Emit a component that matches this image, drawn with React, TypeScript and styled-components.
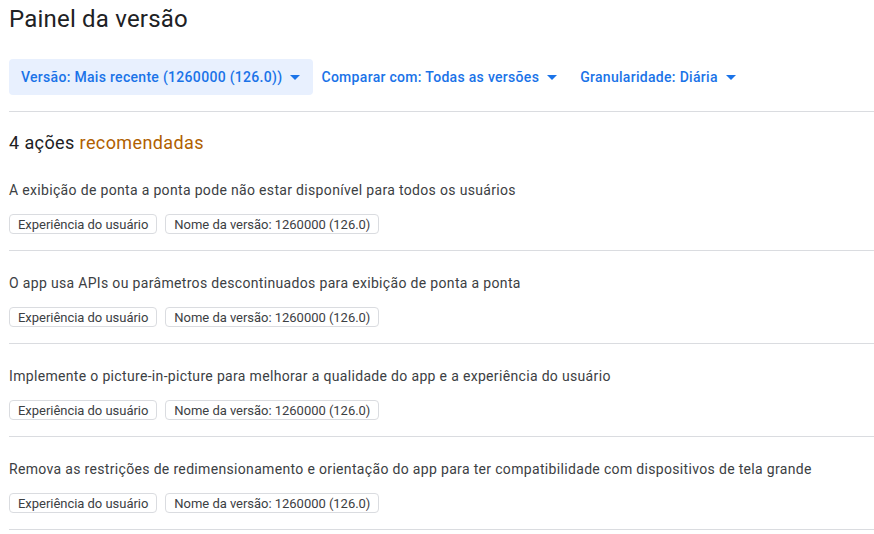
import React from "react";
import styled, { createGlobalStyle } from "styled-components";

const GlobalStyle = createGlobalStyle`
  body {
    margin: 0;
    background: #ffffff;
    font-family: Roboto, "Noto Sans", Arial, sans-serif;
    color: #202124;
  }
`;

const filtros = [
  { rotulo: "Versão: Mais recente (1260000 (126.0))", ativo: true },
  { rotulo: "Comparar com: Todas as versões", ativo: false },
  { rotulo: "Granularidade: Diária", ativo: false },
];

const acoes = [
  "A exibição de ponta a ponta pode não estar disponível para todos os usuários",
  "O app usa APIs ou parâmetros descontinuados para exibição de ponta a ponta",
  "Implemente o picture-in-picture para melhorar a qualidade do app e a experiência do usuário",
  "Remova as restrições de redimensionamento e orientação do app para ter compatibilidade com dispositivos de tela grande",
];

const Seta = () => (
  <svg width="10" height="5" viewBox="0 0 10 5">
    <path d="M0 0 L10 0 L5 5 Z" fill="currentColor" />
  </svg>
);

const App: React.FC = () => (
  <>
    <GlobalStyle />
    <Pagina>
      <Titulo>Painel da versão</Titulo>
      <BarraFiltros>
        {filtros.map((f) => (
          <BotaoFiltro key={f.rotulo} ativo={f.ativo}>
            {f.rotulo}
            <Seta />
          </BotaoFiltro>
        ))}
      </BarraFiltros>
      <Secao>
        <Cabecalho>
          4 ações <Destaque>recomendadas</Destaque>
        </Cabecalho>
        {acoes.map((texto) => (
          <Item key={texto}>
            <TextoItem>{texto}</TextoItem>
            <Etiquetas>
              <Etiqueta>Experiência do usuário</Etiqueta>
              <Etiqueta>Nome da versão: 1260000 (126.0)</Etiqueta>
            </Etiquetas>
          </Item>
        ))}
      </Secao>
    </Pagina>
  </>
);

export default App;

const Pagina = styled.div`
  padding-left: 9px;
  padding-top: 3px;
`;

const Titulo = styled.h1`
  margin: 0;
  font-size: 24px;
  font-weight: 400;
  line-height: 32px;
  letter-spacing: 0.2px;
  color: #202124;
`;

const BarraFiltros = styled.div`
  display: flex;
  align-items: center;
  margin-top: 24px;
  padding-bottom: 16px;
  border-bottom: 1px solid #dadce0;
`;

const BotaoFiltro = styled.div<{ ativo: boolean }>`
  display: flex;
  align-items: center;
  gap: 8px;
  height: 36px;
  padding: ${({ ativo }) => (ativo ? "0 13px 0 12px" : "0 15px 0 8px")};
  border-radius: 4px;
  background: ${({ ativo }) => (ativo ? "#e8f0fe" : "transparent")};
  color: #1a73e8;
  font-size: 14px;
  font-weight: 500;
  letter-spacing: 0.3px;
  cursor: pointer;
`;

const Secao = styled.div``;

const Cabecalho = styled.div`
  padding: 19px 0 3px;
  font-size: 18px;
  line-height: 24px;
  font-weight: 400;
  letter-spacing: 0.4px;
  color: #202124;
`;

const Destaque = styled.span`
  color: #b06000;
`;

const Item = styled.div`
  padding: 22px 0 16px;
  border-bottom: 1px solid #dadce0;
`;

const TextoItem = styled.div`
  font-size: 14px;
  line-height: 20px;
  color: #3c4043;
  letter-spacing: 0.33px;
`;

const Etiquetas = styled.div`
  display: flex;
  gap: 8px;
  margin-top: 14px;
`;

const Etiqueta = styled.span`
  display: inline-flex;
  align-items: center;
  height: 18px;
  padding: 0 8px;
  border: 1px solid #dadce0;
  border-radius: 4px;
  font-size: 13px;
  letter-spacing: -0.03px;
  color: #3c4043;
`;
